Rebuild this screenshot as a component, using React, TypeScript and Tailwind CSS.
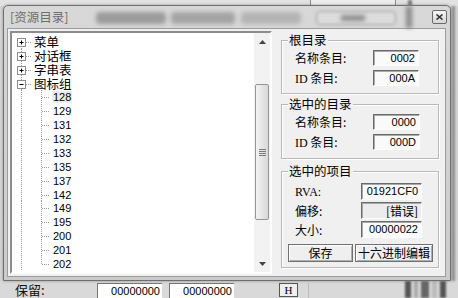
import React from "react";

const CJK = "font-['Noto_Sans_CJK_SC','Noto_Sans',sans-serif]";
const SANS = "font-['Liberation_Sans',Arial,sans-serif]";
const SERIF = "font-['Liberation_Serif','Noto_Sans_CJK_SC',serif]";

const ROOTS = [
  { name: "菜单", open: false },
  { name: "对话框", open: false },
  { name: "字串表", open: false },
  { name: "图标组", open: true },
];
const CHILDREN = ["128", "129", "131", "132", "133", "135", "137", "142", "149", "195", "200", "201", "202"];

function RootRow({ name, open, first }: { name: string; open: boolean; first: boolean }) {
  return (
    <div className="flex h-[13.875px] items-center">
      <svg width="21" height="14" viewBox="0 0 21 14" className="shrink-0 overflow-visible">
        <line x1="9.5" y1={first ? 7 : 0} x2="9.5" y2="14" stroke="#9a9a9a" strokeDasharray="1 1" />
        <line x1="14" y1="7.5" x2="20" y2="7.5" stroke="#9a9a9a" strokeDasharray="1 1" />
        <rect x="5.5" y="3.5" width="8" height="8" fill="#fff" stroke="#8c8c8c" />
        <line x1="7.5" y1="7.5" x2="11.5" y2="7.5" stroke="#000" />
        {!open && <line x1="9.5" y1="5.5" x2="9.5" y2="9.5" stroke="#000" />}
      </svg>
      <span className={`${CJK} ml-px text-[12.5px] leading-[13px] text-black`}>{name}</span>
    </div>
  );
}

function ChildRow({ name, last, selected }: { name: string; last: boolean; selected: boolean }) {
  return (
    <div className="flex h-[13.875px] items-center">
      <svg width="40" height="14" viewBox="0 0 40 14" className="shrink-0 overflow-visible">
        <line x1="9.5" y1="0" x2="9.5" y2="14" stroke="#9a9a9a" strokeDasharray="1 1" />
        <line x1="29.5" y1="0" x2="29.5" y2={last ? 7.5 : 14} stroke="#9a9a9a" strokeDasharray="1 1" />
        <line x1="30" y1="7.5" x2="38" y2="7.5" stroke="#9a9a9a" strokeDasharray="1 1" />
      </svg>
      <span className={`${SANS} px-px text-[11px] leading-[12px] text-black ${selected ? "bg-[#ececec]" : ""}`}>{name}</span>
    </div>
  );
}

function ScrollBar() {
  return (
    <div className="flex w-[16px] shrink-0 flex-col bg-[#f2f2f2]">
      <div className="flex h-[17px] items-center justify-center">
        <svg width="7" height="4" viewBox="0 0 7 4">
          <path d="M0 4 L3.5 0 L7 4 Z" fill="#444" />
        </svg>
      </div>
      <div className="h-[34px]" />
      <div className="mx-px flex h-[136px] flex-col items-center justify-center gap-[1px] rounded-[2px] border border-[#959595] bg-gradient-to-r from-[#f3f3f3] to-[#d9d9d9]">
        <div className="h-px w-[7px] bg-[#7a7a7a]" />
        <div className="h-px w-[7px] bg-[#7a7a7a]" />
        <div className="h-px w-[7px] bg-[#7a7a7a]" />
        <div className="h-px w-[7px] bg-[#7a7a7a]" />
      </div>
      <div className="flex-1" />
      <div className="flex h-[17px] items-center justify-center">
        <svg width="7" height="4" viewBox="0 0 7 4">
          <path d="M0 0 L3.5 4 L7 0 Z" fill="#444" />
        </svg>
      </div>
    </div>
  );
}

function Field({ value, gray, w, h, cjk }: { value: string; gray?: boolean; w: string; h: string; cjk?: boolean }) {
  return (
    <div
      className={`${cjk ? `${CJK} text-[12px]` : `${SANS} text-[11px]`} ${w} ${h} flex items-center justify-end border border-t-[#6a6a6a] border-l-[#6a6a6a] border-b-[#fdfdfd] border-r-[#fdfdfd] pr-[3px] leading-none text-black shadow-[inset_1px_1px_0_#a9a9a9] ${
        gray ? "bg-[#ececec]" : "bg-[#fafafa]"
      }`}
    >
      {value}
    </div>
  );
}

function Group({ title, children, className }: { title: string; children: React.ReactNode; className: string }) {
  return (
    <div className={`relative border border-[#b9b9b9] shadow-[1px_1px_0_#fff,inset_1px_1px_0_#fff] ${className}`}>
      <span className={`${CJK} absolute -top-[8px] left-[6px] bg-[#f0f0f0] px-px text-[12.5px] leading-[14px] text-black`}>
        {title}
      </span>
      {children}
    </div>
  );
}

function Label({ children, w, latin }: { children: React.ReactNode; w: string; latin?: boolean }) {
  return (
    <span className={`${latin ? SERIF : CJK} ${w} shrink-0 text-[12px] leading-[14px] text-black`}>{children}</span>
  );
}

function Button({ children, w }: { children: React.ReactNode; w: string }) {
  return (
    <div
      className={`${CJK} ${w} flex h-[18px] items-center justify-center border border-[#707070] bg-[#efefef] text-[12px] leading-none text-black shadow-[inset_1px_1px_0_#fff,inset_-1px_-1px_0_#b0b0b0]`}
    >
      {children}
    </div>
  );
}

export default function App() {
  return (
    <div className="relative h-[298px] w-[458px] overflow-hidden bg-[#d6d6d6]">
      {/* window underneath */}
      <div className="absolute inset-0 flex flex-col">
        <div className="flex h-[6px] bg-[#e2e2e2]">
          <div className="ml-[310px] h-full w-px bg-[#8a8a8a]" />
          <div className="h-full w-[84px] bg-[#ededed]" />
          <div className="h-full w-px bg-[#8a8a8a]" />
          <div className="ml-[12px] h-full w-[4px] bg-[#7a7a7a] blur-[1px]" />
        </div>
        <div className="flex flex-1 justify-end">
          <div className="mr-[3px] w-[3px] bg-[#8d8d8d] blur-[1px]" />
        </div>
        <div className="flex h-[17px] items-start bg-[#d9d9d9] pt-[2px]">
          <span className={`${CJK} ml-[15px] mt-[-1px] w-[82px] text-[13px] leading-[15px] text-[#111]`}>保留:</span>
          <div className={`${SANS} flex h-[15px] w-[65px] items-center justify-end border-t border-l border-[#777] bg-white pr-[2px] text-[11px] text-black`}>
            00000000
          </div>
          <div className={`${SANS} ml-[7px] flex h-[15px] w-[65px] items-center justify-end border-t border-l border-[#777] bg-white pr-[2px] text-[11px] text-black`}>
            00000000
          </div>
          <div className={`${SERIF} ml-[45px] flex h-[14px] w-[19px] items-center justify-center border border-[#555] bg-[#efefef] text-[11px] text-black`}>
            H
          </div>
          <div className="ml-[10px] h-full w-px bg-[#bdbdbd]" />
          <div className="ml-[96px] mt-[-2px] flex h-[17px] gap-[3px] blur-[1px]">
            <div className="w-[6px] bg-[#555]" />
            <div className="w-[4px] bg-[#aaa]" />
            <div className="w-[8px] bg-[#666]" />
            <div className="w-[5px] bg-[#bbb]" />
            <div className="w-[6px] bg-[#555]" />
          </div>
        </div>
      </div>

      {/* dialog */}
      <div className="absolute left-[3px] top-[5px] flex h-[276px] w-[448px] flex-col rounded-t-[5px] border border-[#6f6f6f] bg-gradient-to-b from-[#d8d8d8] to-[#cbcbcb] shadow-[0_0_3px_rgba(0,0,0,0.35)]">
        {/* title bar */}
        <div className="relative flex h-[22px] shrink-0 items-center">
          <div className="absolute left-[92px] top-[6px] h-[12px] w-[70px] rounded-sm bg-[#9c9c9c] blur-[2px]" />
          <div className="absolute left-[167px] top-[6px] h-[12px] w-[64px] rounded-sm bg-[#a4a4a4] blur-[2px]" />
          <div className="absolute left-[237px] top-[6px] h-[12px] w-[60px] rounded-sm bg-[#b4b4b4] blur-[2px]" />
          <div className="absolute left-[312px] top-[5px] h-[14px] w-[80px] rounded-sm border border-[#9a9a9a] bg-[#dcdcdc] blur-[1.5px]" />
          <div className="absolute left-[337px] top-[9px] h-[6px] w-[24px] bg-[#8e8e8e] blur-[2px]" />
          <div className="absolute left-[402px] top-0 h-[22px] w-[6px] bg-[#8a8a8a] blur-[2px]" />
          <span className={`${CJK} relative ml-[6px] text-[12.5px] leading-[14px] text-[#6e6e6e]`}>[资源目录]</span>
          <div className="relative ml-auto mr-[3px] flex h-[14px] w-[15px] items-center justify-center rounded-[2px] border border-[#6a6a6a] bg-gradient-to-b from-[#f6f6f6] to-[#d6d6d6]">
            <svg width="7" height="6" viewBox="0 0 7 6">
              <path d="M0.5 0.5 L6.5 5.5 M6.5 0.5 L0.5 5.5" stroke="#333" strokeWidth="1.6" />
            </svg>
          </div>
        </div>

        {/* client area */}
        <div className="ml-[3px] flex h-[249px] w-[439px] border border-[#9c9c9c] bg-[#f0f0f0] pl-[2px] pt-[2px]">
          {/* tree */}
          <div className="flex h-[243px] w-[262px] shrink-0 border-2 border-t-[#8c8c8c] border-l-[#8c8c8c] border-b-[#fdfdfd] border-r-[#fdfdfd] bg-white">
            <div className="flex flex-1 flex-col overflow-hidden pt-[2px]">
              {ROOTS.map((r, i) => (
                <RootRow key={r.name} name={r.name} open={r.open} first={i === 0} />
              ))}
              {CHILDREN.map((c, i) => (
                <ChildRow key={c} name={c} last={i === CHILDREN.length - 1} selected={i === 0} />
              ))}
            </div>
            <ScrollBar />
          </div>

          {/* right column */}
          <div className="ml-[9px] flex w-[158px] flex-col pt-[9px]">
            <Group title="根目录" className="flex h-[54px] flex-col gap-[4px] pl-[13px] pt-[9px]">
              <div className="flex h-[16px] items-center">
                <Label w="w-[78px]">名称条目:</Label>
                <Field value="0002" w="w-[46px]" h="h-[16px]" />
              </div>
              <div className="flex h-[16px] items-center">
                <Label w="w-[78px]">
                  <span className={SERIF}>ID</span> 条目:
                </Label>
                <Field value="000A" w="w-[46px]" h="h-[16px]" />
              </div>
            </Group>

            <Group title="选中的目录" className="mt-[10px] flex h-[55px] flex-col gap-[4px] pl-[13px] pt-[9px]">
              <div className="flex h-[16px] items-center">
                <Label w="w-[78px]">名称条目:</Label>
                <Field value="0000" w="w-[47px]" h="h-[16px]" />
              </div>
              <div className="flex h-[16px] items-center">
                <Label w="w-[78px]">
                  <span className={SERIF}>ID</span> 条目:
                </Label>
                <Field value="000D" w="w-[47px]" h="h-[16px]" />
              </div>
            </Group>

            <Group title="选中的项目" className="mt-[12px] flex h-[97px] flex-col pt-[11px]">
              <div className="flex h-[17px] items-center pl-[13px]">
                <Label w="w-[66px]" latin>
                  RVA:
                </Label>
                <Field value="01921CF0" w="w-[61px]" h="h-[17px]" />
              </div>
              <div className="mt-[2px] flex h-[17px] items-center pl-[13px]">
                <Label w="w-[66px]">偏移:</Label>
                <Field value="[错误]" gray cjk w="w-[61px]" h="h-[17px]" />
              </div>
              <div className="mt-[2px] flex h-[17px] items-center pl-[13px]">
                <Label w="w-[66px]">大小:</Label>
                <Field value="00000022" w="w-[61px]" h="h-[17px]" />
              </div>
              <div className="mt-[6px] flex gap-[2px] pl-[6px]">
                <Button w="w-[65px]">保存</Button>
                <Button w="w-[78px]">十六进制编辑</Button>
              </div>
            </Group>
          </div>
        </div>
      </div>
    </div>
  );
}
